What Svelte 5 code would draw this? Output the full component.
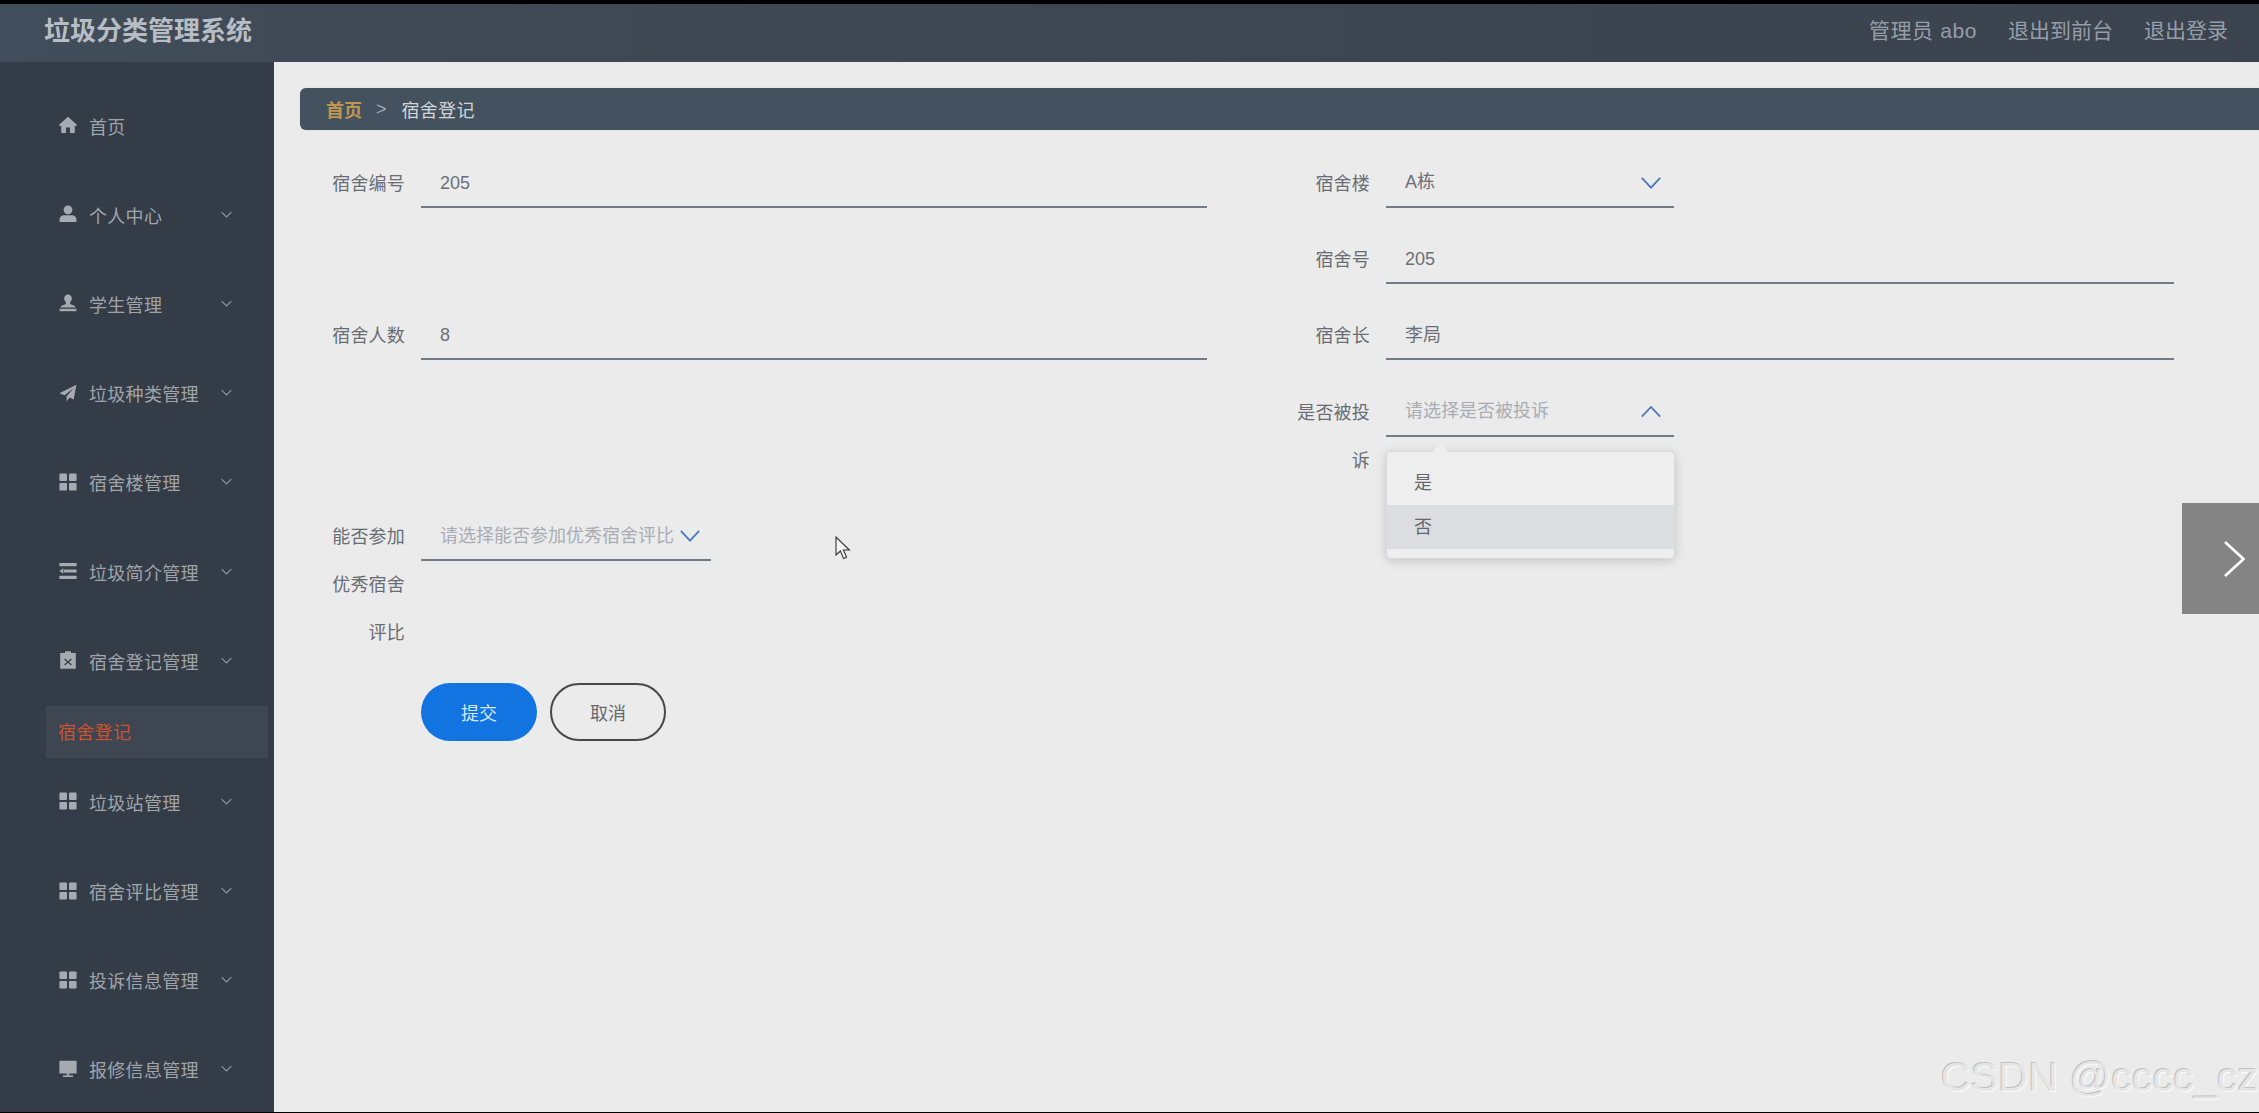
<script>
  const menu = [
    { label: '首页', icon: 'home', arrow: false },
    { label: '个人中心', icon: 'user', arrow: true },
    { label: '学生管理', icon: 'stamp', arrow: true },
    { label: '垃圾种类管理', icon: 'plane', arrow: true },
    { label: '宿舍楼管理', icon: 'grid', arrow: true },
    { label: '垃圾简介管理', icon: 'list', arrow: true },
    { label: '宿舍登记管理', icon: 'clip', arrow: true, sub: '宿舍登记' },
    { label: '垃圾站管理', icon: 'grid', arrow: true },
    { label: '宿舍评比管理', icon: 'grid', arrow: true },
    { label: '投诉信息管理', icon: 'grid', arrow: true },
    { label: '报修信息管理', icon: 'screen', arrow: true }
  ];
</script>

{#snippet chevron(cls, d)}
  <svg class={cls} viewBox="0 0 24 24" fill="none" stroke="currentColor"><path {d} /></svg>
{/snippet}

{#snippet navIcon(name)}
  <svg class="nav-icon" viewBox="0 0 18 18" fill="currentColor">
    {#if name === 'home'}
      <path fill-rule="evenodd" d="M9 .8 .4 8.4V10H2.2V17H7V11.6H11V17H15.8V10H17.6V8.4Z" />
    {:else if name === 'user'}
      <circle cx="9" cy="4.8" r="4.4" />
      <path d="M.6 17V14.4C.6 11.6 3 10.2 5.4 10.2H12.6C15 10.2 17.4 11.6 17.4 14.4V17Z" />
    {:else if name === 'stamp'}
      <path d="M9 .6C6.6.6 5.2 2.4 5.2 4.6 5.2 6.8 7 8 7 9.4 7 10.8 1.6 10.6 1.4 13.6H16.6C16.4 10.6 11 10.8 11 9.4 11 8 12.8 6.8 12.8 4.6 12.8 2.4 11.4.6 9 .6Z" />
      <rect x="0.6" y="14.8" width="16.8" height="2.4" />
    {:else if name === 'plane'}
      <path d="M17.4.8.4 9.2 5.6 11.2 15 4 7.6 12.2V17.4L10.6 13.6 14.6 15.4Z" />
    {:else if name === 'grid'}
      <rect x="0.4" y="0.4" width="7.6" height="7.6" rx="1" />
      <rect x="10" y="0.4" width="7.6" height="7.6" rx="1" />
      <rect x="0.4" y="10" width="7.6" height="7.6" rx="1" />
      <rect x="10" y="10" width="7.6" height="7.6" rx="1" />
    {:else if name === 'list'}
      <rect x="0.4" y="1" width="17.2" height="3.2" rx=".5" />
      <rect x="5" y="7.4" width="12.6" height="3.2" rx=".5" />
      <path d="M4.4 6.2V11.8L.4 9Z" />
      <rect x="0.4" y="13.8" width="17.2" height="3.2" rx=".5" />
    {:else if name === 'clip'}
      <path fill-rule="evenodd" d="M6 .2H12V2H16.8V17.8H1.2V2H6ZM6 7.6 9 10.2 12 7.6 12.8 8.5 10 11 12.8 13.5 12 14.4 9 11.8 6 14.4 5.2 13.5 8 11 5.2 8.5Z" />
    {:else}
      <rect x="0.4" y="0.8" width="17.2" height="12.6" rx=".6" />
      <rect x="7.6" y="13.4" width="2.8" height="2.2" />
      <rect x="4" y="15.4" width="10" height="1.6" />
    {/if}
  </svg>
{/snippet}

<div class="screen">
  <header class="topbar">
    <h1 class="brand">垃圾分类管理系统</h1>
    <nav class="top-links">
      <span class="admin">管理员 abo</span>
      <span>退出到前台</span>
      <span>退出登录</span>
    </nav>
  </header>

  <div class="body">
    <aside class="sidebar">
      {#each menu as item}
        <div class="nav-row">
          {@render navIcon(item.icon)}
          <span class="nav-label">{item.label}</span>
          {#if item.arrow}
            {@render chevron('nav-arrow', 'M3 7.5 12 16.5 21 7.5')}
          {/if}
        </div>
        {#if item.sub}
          <div class="nav-sub">{item.sub}</div>
        {/if}
      {/each}
    </aside>

    <main class="main">
      <div class="crumb">
        <span class="crumb-home">首页</span>
        <span class="crumb-sep">&gt;</span>
        <span class="crumb-cur">宿舍登记</span>
      </div>

      <form class="form">
        <div class="field">
          <div class="label">宿舍编号</div>
          <div class="control">205</div>
        </div>
        <div class="field">
          <div class="label">宿舍楼</div>
          <div class="control select">
            <span class="value">A栋</span>
            {@render chevron('sel-arrow', 'M2 6.5 12 17 22 6.5')}
          </div>
        </div>

        <div></div>
        <div class="field">
          <div class="label">宿舍号</div>
          <div class="control">205</div>
        </div>

        <div class="field">
          <div class="label">宿舍人数</div>
          <div class="control">8</div>
        </div>
        <div class="field">
          <div class="label">宿舍长</div>
          <div class="control">李局</div>
        </div>

        <div></div>
        <div class="field">
          <div class="label">是否被投诉</div>
          <div class="control select open">
            <span class="value placeholder">请选择是否被投诉</span>
            {@render chevron('sel-arrow', 'M2 17 12 6.5 22 17')}
            <div class="dropdown">
              <div class="option">是</div>
              <div class="option hover">否</div>
            </div>
          </div>
        </div>

        <div class="field">
          <div class="label">能否参加优秀宿舍评比</div>
          <div class="control select wide">
            <span class="value placeholder">请选择能否参加优秀宿舍评比</span>
            {@render chevron('sel-arrow', 'M2 6.5 12 17 22 6.5')}
          </div>
        </div>
        <div></div>

        <div class="actions">
          <button type="button" class="btn primary">提交</button>
          <button type="button" class="btn ghost">取消</button>
        </div>
      </form>
    </main>
  </div>

  <div class="pager">
    <svg viewBox="0 0 21 36" fill="none" stroke="#fff" stroke-width="2.6"><path d="M1 1 19.5 18 1 35" /></svg>
  </div>

  <svg class="cursor" viewBox="0 0 16 24"><path d="M1 1V19L5.4 15 8.6 22.6 11.6 21.2 8.4 14H14.4Z" fill="#f4f4f4" stroke="#333" stroke-width="1.1" /></svg>

  <div class="watermark">CSDN @cccc_cz</div>
</div>

<style>
  :global(body) {
    margin: 0;
    background: #000;
  }
  .screen {
    position: relative;
    width: 2259px;
    height: 1113px;
    box-sizing: border-box;
    padding: 4px 0 1px;
    background: #000;
    display: flex;
    flex-direction: column;
    overflow: hidden;
    font-family: "Liberation Sans", "Noto Sans CJK SC", sans-serif;
    font-size: 18px;
  }
  .topbar {
    flex: 0 0 58px;
    display: flex;
    align-items: center;
    justify-content: space-between;
    padding: 0 31px 9px 44px;
    box-sizing: border-box;
    background: linear-gradient(90deg, #414d5a 0%, #3e4752 30%, #3b434e 100%);
  }
  .brand {
    margin: 0;
    font-size: 26px;
    font-weight: 700;
    color: #b7bdc4;
  }
  .top-links {
    display: flex;
    gap: 31px;
    font-size: 21px;
    color: #969ea8;
  }
  .admin {
    letter-spacing: .6px;
  }
  .body {
    flex: 1;
    display: flex;
    min-height: 0;
  }
  .sidebar {
    flex: 0 0 274px;
    padding-top: 20px;
    box-sizing: border-box;
    background: #343c47;
    overflow: hidden;
  }
  .nav-row {
    height: 89.2px;
    display: flex;
    align-items: center;
    padding-left: 59px;
    box-sizing: border-box;
    color: #a0a5ab;
  }
  .nav-icon {
    width: 18px;
    height: 18px;
    flex: none;
    margin-right: 12px;
    margin-top: -3px;
    color: #a6abb1;
  }
  .nav-label {
    width: 131px;
    white-space: nowrap;
    letter-spacing: .3px;
    margin-top: -2px;
  }
  .nav-arrow {
    width: 13px;
    height: 13px;
    color: #8f959c;
    stroke-width: 2.2;
    margin-top: -3px;
  }
  .nav-sub {
    height: 52px;
    margin: 0 6px 0 46px;
    padding-left: 12px;
    line-height: 54px;
    background: #3e4751;
    color: #cc5231;
    letter-spacing: .3px;
  }
  .main {
    flex: 1;
    min-width: 0;
    display: flex;
    flex-direction: column;
    background: #ebebeb;
  }
  .crumb {
    margin: 26px 0 0 26px;
    height: 42px;
    display: flex;
    align-items: center;
    padding-left: 26px;
    background: #44525f;
    border-radius: 6px 0 0 6px;
    box-shadow: 0 0 1px #aeb4ba;
  }
  .crumb-home {
    color: #c09650;
    font-weight: 700;
  }
  .crumb-sep {
    margin: 0 15px 0 14px;
    color: #a3a9b0;
  }
  .crumb-cur {
    color: #d2d5d8;
    letter-spacing: .3px;
  }
  .form {
    margin: 29.5px 0 0 51px;
    display: grid;
    grid-template-columns: 882px 884px;
    column-gap: 83px;
    row-gap: 28.4px;
    align-items: start;
    width: max-content;
  }
  .field {
    display: flex;
    gap: 16px;
    align-items: flex-start;
  }
  .label {
    flex: 0 0 80px;
    text-align: right;
    line-height: 48px;
    letter-spacing: .2px;
    color: #696d73;
  }
  .control {
    flex: 1;
    position: relative;
    height: 48px;
    box-sizing: border-box;
    line-height: 47px;
    padding-left: 19px;
    border-bottom: 2px solid #727a86;
    color: #6b7078;
  }
  .select {
    flex: 0 0 288px;
    display: flex;
    align-items: center;
    padding-right: 12px;
  }
  .select.wide {
    flex: 0 0 288px;
    padding-right: 10px;
  }
  .value {
    flex: 1;
    min-width: 0;
    overflow: hidden;
    white-space: nowrap;
  }
  .placeholder {
    color: #a9adb3;
  }
  .sel-arrow {
    flex: none;
    margin-left: 5px;
    width: 22px;
    height: 22px;
    color: #4a78bd;
    stroke-width: 2;
  }
  .dropdown {
    position: absolute;
    top: 63px;
    left: 1px;
    right: 0;
    height: 106px;
    padding-top: 9px;
    box-sizing: border-box;
    background: #eeeeee;
    border-radius: 4px;
    box-shadow: 0 0 0 1px #dadada, 0 2px 12px rgba(0, 0, 0, .2);
    z-index: 2;
  }
  .dropdown::before {
    content: "";
    position: absolute;
    top: -6px;
    left: 48px;
    width: 12px;
    height: 12px;
    background: #eeeeee;
    transform: rotate(45deg);
  }
  .option {
    position: relative;
    height: 44px;
    line-height: 44px;
    padding-left: 27px;
    color: #64686e;
  }
  .option.hover {
    background: #dcdde0;
  }
  .actions {
    grid-column: 1 / -1;
    display: flex;
    gap: 13px;
    margin-left: 96px;
    margin-top: -2px;
  }
  .btn {
    width: 116px;
    height: 58px;
    border-radius: 29px;
    font: inherit;
    padding: 0;
  }
  .primary {
    background: #1274e0;
    border: none;
    color: #d6e6f6;
  }
  .ghost {
    background: transparent;
    border: 2px solid #484848;
    color: #666a70;
  }
  .pager {
    position: absolute;
    left: 2182px;
    top: 503px;
    width: 77px;
    height: 111px;
    background: #848484;
  }
  .pager svg {
    position: absolute;
    left: 42px;
    top: 38px;
    width: 21px;
    height: 36px;
  }
  .cursor {
    position: absolute;
    left: 835px;
    top: 536px;
    width: 16px;
    height: 24px;
  }
  .watermark {
    position: absolute;
    left: 1941px;
    top: 1053px;
    font-size: 41.3px;
    line-height: 48px;
    white-space: nowrap;
    color: #e6e6e6;
    text-shadow: -1px -1px 0 #bfbfbf, 1px 1px 0 #fbfbfb;
  }
</style>
